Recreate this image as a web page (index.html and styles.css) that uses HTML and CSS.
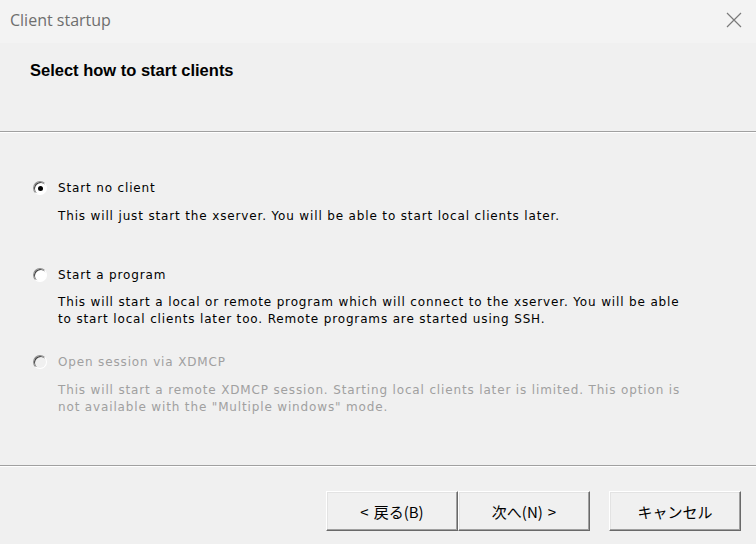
FILE: index.html
```html
<!DOCTYPE html>
<html>
<head>
<meta charset="utf-8">
<link rel="stylesheet" href="styles.css">
</head>
<body>
<div class="window">
  <div class="titlebar">
    <span class="title">Client startup</span>
    <svg class="close" width="16" height="16" viewBox="0 0 16 16"><path d="M1 1 L15 15 M15 1 L1 15" stroke="#7a7a7a" stroke-width="1.2" fill="none"/></svg>
  </div>
  <div class="header">
    <div class="heading">Select how to start clients</div>
  </div>
  <div class="sep"></div>
  <div class="body">
    <div class="option opt1">
      <div class="optrow"><span class="radio checked"><span class="dot"></span></span><span class="label">Start no client</span></div>
      <div class="desc">This will just start the xserver. You will be able to start local clients later.</div>
    </div>
    <div class="option opt2">
      <div class="optrow"><span class="radio"></span><span class="label">Start a program</span></div>
      <div class="desc">This will start a local or remote program which will connect to the xserver. You will be able<br>to start local clients later too. Remote programs are started using SSH.</div>
    </div>
    <div class="option opt3 disabled">
      <div class="optrow"><span class="radio"></span><span class="label">Open session via XDMCP</span></div>
      <div class="desc">This will start a remote XDMCP session. Starting local clients later is limited. This option is<br>not available with the "Multiple windows" mode.</div>
    </div>
  </div>
  <div class="sep"></div>
  <div class="footer">
    <div class="btngroup">
      <button class="btn"><span class="arrow">&lt;</span>戻る(B)</button>
      <button class="btn">次へ(N)<span class="arrow r">&gt;</span></button>
    </div>
    <button class="btn">キャンセル</button>
  </div>
</div>
</body>
</html>
```

FILE: styles.css
```css
html, body {
  margin: 0;
  padding: 0;
  background: #f0f0f0;
}
.window {
  width: 756px;
  height: 544px;
  display: flex;
  flex-direction: column;
  background: #f0f0f0;
  overflow: hidden;
}
.titlebar {
  height: 43px;
  flex: none;
  background: #f3f3f3;
  display: flex;
  align-items: center;
  justify-content: space-between;
  padding: 0 14px 0 10px;
}
.title {
  font-family: "Open Sans", "Noto Sans", sans-serif;
  font-size: 16px;
  color: #6e6e6e;
  margin-top: -3px;
}
.close {
  margin-top: -4px;
}
.header {
  height: 88px;
  flex: none;
  background: #f0f0f0;
  padding: 0 0 0 30px;
  box-sizing: border-box;
}
.heading {
  font-family: "Liberation Sans", Arial, sans-serif;
  font-weight: bold;
  font-size: 16.5px;
  color: #000;
  margin-top: 18px;
}
.sep {
  border-top: 1px solid #a0a0a0;
  border-bottom: 1px solid #ffffff;
  height: 0;
  flex: none;
}
.body {
  height: 332px;
  flex: none;
  padding: 46px 0 0 33px;
  box-sizing: border-box;
  font-family: "DejaVu Sans", sans-serif;
  font-size: 12px;
  color: #000;
}
.optrow {
  display: flex;
  align-items: center;
  height: 18px;
}
.radio {
  width: 14px;
  height: 14px;
  border-radius: 50%;
  box-sizing: border-box;
  border: 1px solid #909090;
  border-right-color: #ffffff;
  border-bottom-color: #ffffff;
  background: #fff;
  box-shadow: inset 1px 1px 0 #404040;
  display: flex;
  align-items: center;
  justify-content: center;
  flex: none;
}
.dot {
  width: 5px;
  height: 5px;
  border-radius: 50%;
  background: #000;
}
.label {
  margin-left: 11px;
  letter-spacing: 0.85px;
}
.desc {
  margin-top: 11px;
  margin-left: 25px;
  line-height: 17px;
  letter-spacing: 0.85px;
}
.opt1 {
  margin-bottom: 41px;
}
.opt2 {
  margin-bottom: 25px;
}
.opt2 .desc {
  margin-top: 10px;
}
.opt3 .desc {
  margin-top: 11px;
}
.disabled {
  color: #a0a0a0;
}
.disabled .radio {
  background: #f0f0f0;
}
.footer {
  flex: 1;
  display: flex;
  justify-content: flex-end;
  align-items: flex-start;
  padding: 24px 15px 0 0;
  gap: 19px;
}
.btngroup {
  display: flex;
}
.btn {
  width: 132px;
  height: 40px;
  background: #f0f0f0;
  font-family: "Noto Sans CJK JP", sans-serif;
  font-size: 15px;
  color: #000;
  border: 1px solid;
  border-color: #ffffff #696969 #696969 #ffffff;
  box-shadow: inset -1px -1px 0 #a0a0a0, inset 1px 1px 0 #e3e3e3;
  padding: 0;
  margin: 0;
}
.arrow {
  margin-right: 5px;
}
.arrow.r {
  margin-right: 0;
  margin-left: 5px;
}
```
